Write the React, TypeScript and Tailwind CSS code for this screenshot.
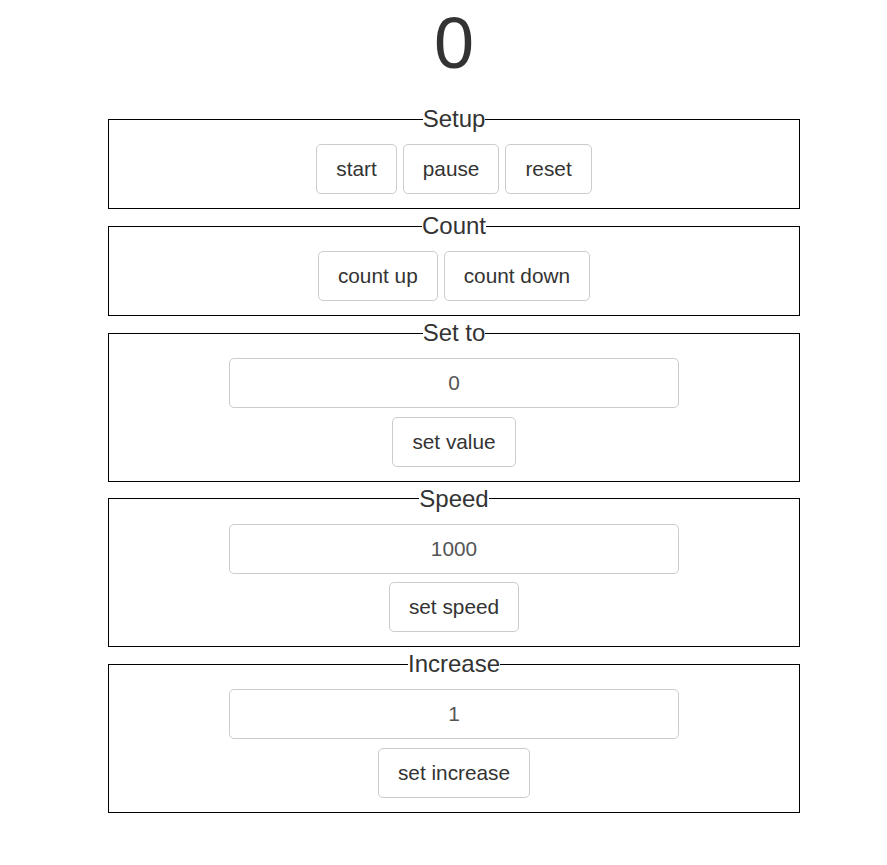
import { useState } from "react";

const btn =
  "rounded-[5px] border border-[#ccc] bg-white px-[19px] py-[10px] text-[20.8px] leading-[28px] text-[#333]";
const field =
  "w-[450px] rounded-[5px] border border-[#ccc] bg-white px-3 py-[10px] text-center text-[20.8px] leading-[28px] text-[#555] outline-none";

function Box({ title, children }: { title: string; children: React.ReactNode }) {
  return (
    <fieldset className="border border-black px-3 pb-[14px]">
      <legend className="mx-auto px-0 text-[24px] leading-[26px] text-[#333]">{title}</legend>
      <div className="flex flex-col items-center pt-3">{children}</div>
    </fieldset>
  );
}

export default function App() {
  const [value, setValue] = useState("0");
  const [speed, setSpeed] = useState("1000");
  const [step, setStep] = useState("1");

  return (
    <div className="min-h-screen bg-white font-['Liberation_Sans',Arial,sans-serif] text-[#333]">
      <div className="ml-[108px] flex w-[692px] flex-col">
        <h1 className="mb-[23px] pt-[3px] text-center text-[72px] leading-[80px] font-normal text-[#333]">0</h1>
        <div className="flex flex-col gap-[4px]">
          <Box title="Setup">
            <div className="flex gap-[6px]">
              <button className={btn}>start</button>
              <button className={btn}>pause</button>
              <button className={btn}>reset</button>
            </div>
          </Box>
          <Box title="Count">
            <div className="flex gap-[6px]">
              <button className={btn}>count up</button>
              <button className={btn}>count down</button>
            </div>
          </Box>
          <Box title="Set to">
            <input className={field} value={value} onChange={(e) => setValue(e.target.value)} />
            <button className={`${btn} mt-[8.5px]`}>set value</button>
          </Box>
          <Box title="Speed">
            <input className={field} value={speed} onChange={(e) => setSpeed(e.target.value)} />
            <button className={`${btn} mt-[8.5px]`}>set speed</button>
          </Box>
          <Box title="Increase">
            <input className={field} value={step} onChange={(e) => setStep(e.target.value)} />
            <button className={`${btn} mt-[8.5px]`}>set increase</button>
          </Box>
        </div>
      </div>
    </div>
  );
}
